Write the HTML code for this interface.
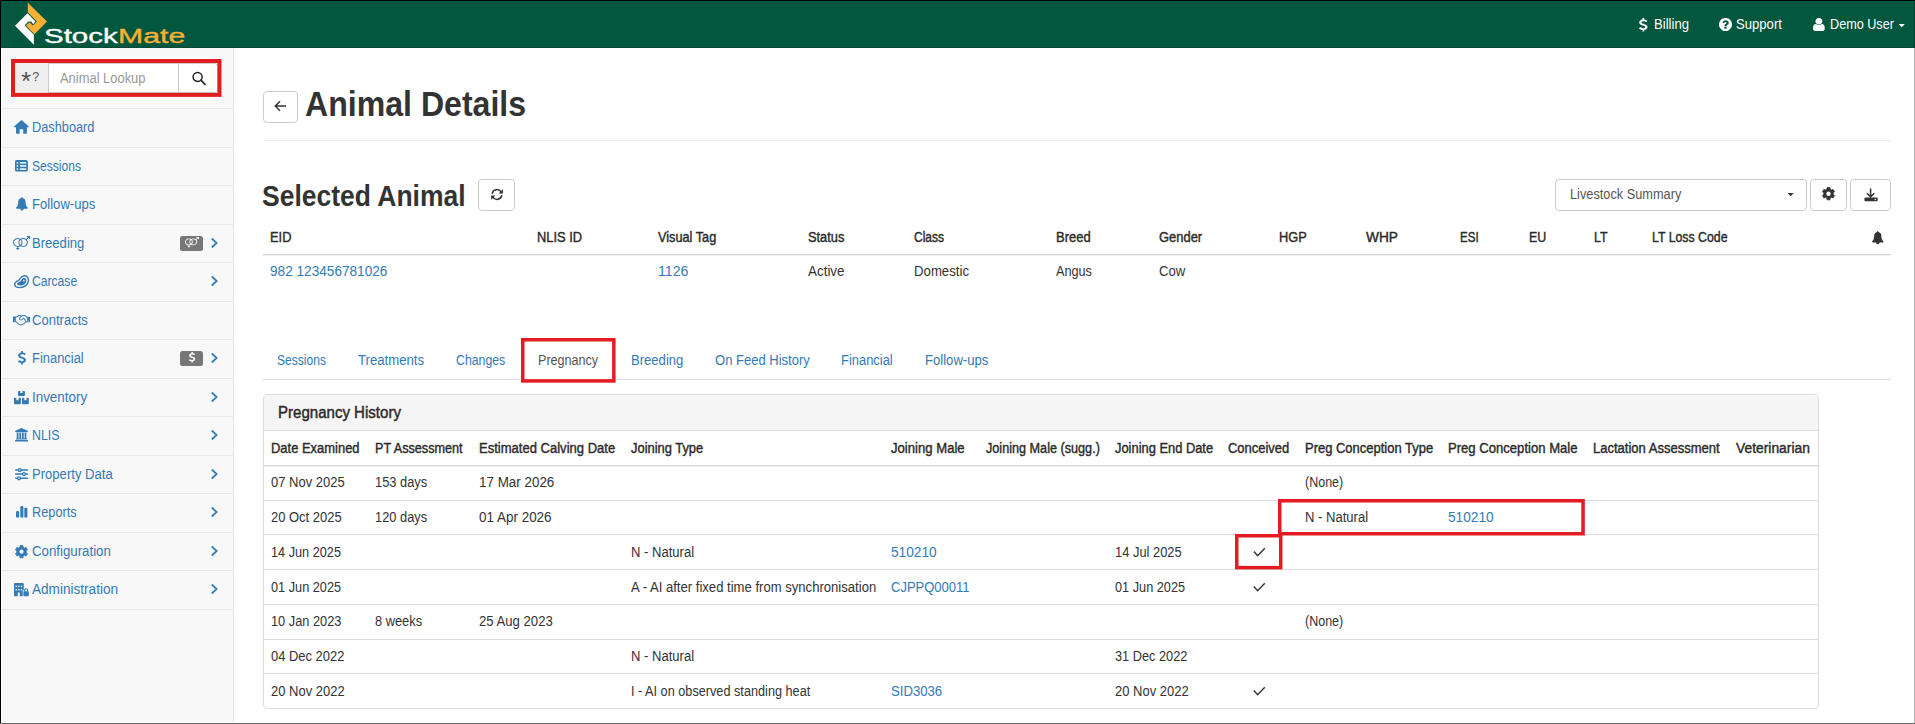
<!DOCTYPE html>
<html lang="en"><head><meta charset="utf-8"><title>StockMate - Animal Details</title>
<style>
html,body{margin:0;padding:0;background:#fff;}
body{width:1915px;height:724px;position:relative;overflow:hidden;font-family:"Liberation Sans", sans-serif;font-size:13.125px;color:#333;}
.g{position:absolute;left:0;top:0;width:0;height:0;margin:0;padding:0;}
.g>*{position:absolute;box-sizing:border-box;}
a{text-decoration:none;cursor:pointer;}
.t{white-space:pre;line-height:1;transform-origin:0 50%;}
svg{display:block;overflow:visible;}
</style></head><body>
<header class="g" aria-label="Top navigation">
<div style="left:0px;top:0px;width:1915px;height:48px;background:#02573f;"></div>
<div style="left:0px;top:47px;width:1915px;height:1px;background:#014a36;"></div>
<svg style="left:0px;top:0px" width="60" height="48" viewBox="0 0 60 48"><polygon fill="#fbb034" points="27.8,2.8 47,21.55 34.5,34.2 25.9,25.5 29.5,22.2 32.9,25.5 36.9,21.55 27.8,12.3"/><polygon fill="#fff" points="27.5,13.3 15,25.7 33.9,44.8 33.9,34.8 24.7,25.5 28.2,21.55 31.2,21.55 33.2,24.2 35.5,21.55"/></svg>
<span class="t" style="left:44.40px;top:26.05px;font-size:20.5px;color:#fff;-webkit-text-stroke:0.35px #fff;transform:scaleX(1.4391);">Stock</span>
<span class="t" style="left:117.60px;top:26.05px;font-size:20.5px;color:#fbb034;-webkit-text-stroke:0.35px #fbb034;transform:scaleX(1.4744);">Mate</span>
<svg style="left:1638.5px;top:17.5px" width="8.5" height="13.5" viewBox="45.0 -1536.0 933.0 1792.0" preserveAspectRatio="none"><path fill="#fff" transform="scale(1,-1)" d="M978 351q0 -153 -99.5 -263.5t-258.5 -136.5v-175q0 -14 -9 -23t-23 -9h-135q-13 0 -22.5 9.5t-9.5 22.5v175q-66 9 -127.5 31t-101.5 44.5t-74 48t-46.5 37.5t-17.5 18q-17 21 -2 41l103 135q7 10 23 12q15 2 24 -9l2 -2q113 -99 243 -125q37 -8 74 -8q81 0 142.5 43
t61.5 122q0 28 -15 53t-33.5 42t-58.5 37.5t-66 32t-80 32.5q-39 16 -61.5 25t-61.5 26.5t-62.5 31t-56.5 35.5t-53.5 42.5t-43.5 49t-35.5 58t-21 66.5t-8.5 78q0 138 98 242t255 134v180q0 13 9.5 22.5t22.5 9.5h135q14 0 23 -9t9 -23v-176q57 -6 110.5 -23t87 -33.5
t63.5 -37.5t39 -29t15 -14q17 -18 5 -38l-81 -146q-8 -15 -23 -16q-14 -3 -27 7q-3 3 -14.5 12t-39 26.5t-58.5 32t-74.5 26t-85.5 11.5q-95 0 -155 -43t-60 -111q0 -26 8.5 -48t29.5 -41.5t39.5 -33t56 -31t60.5 -27t70 -27.5q53 -20 81 -31.5t76 -35t75.5 -42.5t62 -50
t53 -63.5t31.5 -76.5t13 -94z"/></svg>
<span class="t" style="left:1653.70px;top:17.15px;font-size:14.0px;color:#fff;transform:scaleX(0.9356);">Billing</span>
<svg style="left:1719.2px;top:17.5px" width="13" height="13" viewBox="0.0 -1408.0 1536.0 1536.0" preserveAspectRatio="none"><path fill="#fff" transform="scale(1,-1)" d="M896 160v192q0 14 -9 23t-23 9h-192q-14 0 -23 -9t-9 -23v-192q0 -14 9 -23t23 -9h192q14 0 23 9t9 23zM1152 832q0 88 -55.5 163t-138.5 116t-170 41q-243 0 -371 -213q-15 -24 8 -42l132 -100q7 -6 19 -6q16 0 25 12q53 68 86 92q34 24 86 24q48 0 85.5 -26t37.5 -59
q0 -38 -20 -61t-68 -45q-63 -28 -115.5 -86.5t-52.5 -125.5v-36q0 -14 9 -23t23 -9h192q14 0 23 9t9 23q0 19 21.5 49.5t54.5 49.5q32 18 49 28.5t46 35t44.5 48t28 60.5t12.5 81zM1536 640q0 -209 -103 -385.5t-279.5 -279.5t-385.5 -103t-385.5 103t-279.5 279.5
t-103 385.5t103 385.5t279.5 279.5t385.5 103t385.5 -103t279.5 -279.5t103 -385.5z"/></svg>
<span class="t" style="left:1736.40px;top:17.15px;font-size:14.0px;color:#fff;transform:scaleX(0.9356);">Support</span>
<svg style="left:1813.2px;top:17.5px" width="11.8" height="13" viewBox="0.0 -1408.0 1280.0 1536.0" preserveAspectRatio="none"><path fill="#fff" transform="scale(1,-1)" d="M1280 137q0 -109 -62.5 -187t-150.5 -78h-854q-88 0 -150.5 78t-62.5 187q0 85 8.5 160.5t31.5 152t58.5 131t94 89t134.5 34.5q131 -128 313 -128t313 128q76 0 134.5 -34.5t94 -89t58.5 -131t31.5 -152t8.5 -160.5zM1024 1024q0 -159 -112.5 -271.5t-271.5 -112.5
t-271.5 112.5t-112.5 271.5t112.5 271.5t271.5 112.5t271.5 -112.5t112.5 -271.5z"/></svg>
<span class="t" style="left:1830.40px;top:17.15px;font-size:14.0px;color:#fff;transform:scaleX(0.9026);">Demo User</span>
<svg style="left:1899.3px;top:23.5px" width="5.6" height="3.2" viewBox="0.0 -896.0 1024.0 576.0" preserveAspectRatio="none"><path fill="#fff" transform="scale(1,-1)" d="M1024 832q0 -26 -19 -45l-448 -448q-19 -19 -45 -19t-45 19l-448 448q-19 19 -19 45t19 45t45 19h896q26 0 45 -19t19 -45z"/></svg>
</header>
<nav class="g" aria-label="Sidebar">
<div style="left:2px;top:48px;width:232px;height:674px;background:#f8f8f8;border-right:1px solid #e7e7e7;"></div>
<div style="left:15px;top:63px;width:203px;height:30px;background:#fff;border:1px solid #ccc;border-radius:3px;"></div>
<div style="left:15px;top:63px;width:34px;height:30px;background:#eee;border-right:1px solid #ccc;"></div>
<div style="left:178px;top:63px;width:1px;height:30px;background:#ccc;"></div>
<span class="t" style="left:21px;top:68.2px;font-size:26px;color:#555">*</span>
<span class="t" style="left:32.3px;top:70.6px;font-size:12.5px;color:#555">?</span>
<span class="t" style="left:59.60px;top:70.65px;font-size:14.0px;color:#999;transform:scaleX(0.9231);">Animal Lookup</span>
<svg style="left:190px;top:70px" width="18" height="18" viewBox="0 0 18 18"><circle cx="7.6" cy="6.9" r="4.5" fill="none" stroke="#222" stroke-width="1.5"/><path d="M10.9 10.2 L15 14.3" stroke="#222" stroke-width="1.7" stroke-linecap="round"/></svg>
<svg style="left:11px;top:59px" width="210.50" height="37.90" viewBox="0 0 210.50 37.90"><rect x="2.0" y="2.0" width="206.50" height="33.90" fill="none" stroke="#e31c22" stroke-width="4"/></svg>
<div style="left:2px;top:108px;width:231px;height:1px;background:#e7e7e7;"></div>
<div style="left:2px;top:147px;width:231px;height:1px;background:#e7e7e7;"></div>
<div style="left:2px;top:185px;width:231px;height:1px;background:#e7e7e7;"></div>
<div style="left:2px;top:224px;width:231px;height:1px;background:#e7e7e7;"></div>
<div style="left:2px;top:262px;width:231px;height:1px;background:#e7e7e7;"></div>
<div style="left:2px;top:301px;width:231px;height:1px;background:#e7e7e7;"></div>
<div style="left:2px;top:339px;width:231px;height:1px;background:#e7e7e7;"></div>
<div style="left:2px;top:378px;width:231px;height:1px;background:#e7e7e7;"></div>
<div style="left:2px;top:416px;width:231px;height:1px;background:#e7e7e7;"></div>
<div style="left:2px;top:455px;width:231px;height:1px;background:#e7e7e7;"></div>
<div style="left:2px;top:493px;width:231px;height:1px;background:#e7e7e7;"></div>
<div style="left:2px;top:532px;width:231px;height:1px;background:#e7e7e7;"></div>
<div style="left:2px;top:570px;width:231px;height:1px;background:#e7e7e7;"></div>
<div style="left:2px;top:609px;width:231px;height:1px;background:#e7e7e7;"></div>
<a class="t" style="left:32.10px;top:119.95px;font-size:14.0px;color:#337ab7;transform:scaleX(0.9117);">Dashboard</a>
<a class="t" style="left:32.10px;top:158.95px;font-size:14.0px;color:#337ab7;transform:scaleX(0.8611);">Sessions</a>
<a class="t" style="left:32.10px;top:196.95px;font-size:14.0px;color:#337ab7;transform:scaleX(0.9351);">Follow-ups</a>
<a class="t" style="left:32.10px;top:235.95px;font-size:14.0px;color:#337ab7;transform:scaleX(0.9336);">Breeding</a>
<svg style="left:210px;top:237px" width="9" height="12" viewBox="0 0 9 12"><path d="M1.7 1.5 L6.7 6 L1.7 10.5" fill="none" stroke="#337ab7" stroke-width="1.7"/></svg>
<a class="t" style="left:32.10px;top:273.95px;font-size:14.0px;color:#337ab7;transform:scaleX(0.8660);">Carcase</a>
<svg style="left:210px;top:275px" width="9" height="12" viewBox="0 0 9 12"><path d="M1.7 1.5 L6.7 6 L1.7 10.5" fill="none" stroke="#337ab7" stroke-width="1.7"/></svg>
<a class="t" style="left:32.10px;top:312.95px;font-size:14.0px;color:#337ab7;transform:scaleX(0.9314);">Contracts</a>
<a class="t" style="left:32.10px;top:350.95px;font-size:14.0px;color:#337ab7;transform:scaleX(0.9230);">Financial</a>
<svg style="left:210px;top:352px" width="9" height="12" viewBox="0 0 9 12"><path d="M1.7 1.5 L6.7 6 L1.7 10.5" fill="none" stroke="#337ab7" stroke-width="1.7"/></svg>
<a class="t" style="left:32.10px;top:389.95px;font-size:14.0px;color:#337ab7;transform:scaleX(0.9569);">Inventory</a>
<svg style="left:210px;top:391px" width="9" height="12" viewBox="0 0 9 12"><path d="M1.7 1.5 L6.7 6 L1.7 10.5" fill="none" stroke="#337ab7" stroke-width="1.7"/></svg>
<a class="t" style="left:32.10px;top:427.95px;font-size:14.0px;color:#337ab7;transform:scaleX(0.8845);">NLIS</a>
<svg style="left:210px;top:429px" width="9" height="12" viewBox="0 0 9 12"><path d="M1.7 1.5 L6.7 6 L1.7 10.5" fill="none" stroke="#337ab7" stroke-width="1.7"/></svg>
<a class="t" style="left:32.10px;top:466.95px;font-size:14.0px;color:#337ab7;transform:scaleX(0.9340);">Property Data</a>
<svg style="left:210px;top:468px" width="9" height="12" viewBox="0 0 9 12"><path d="M1.7 1.5 L6.7 6 L1.7 10.5" fill="none" stroke="#337ab7" stroke-width="1.7"/></svg>
<a class="t" style="left:32.10px;top:504.95px;font-size:14.0px;color:#337ab7;transform:scaleX(0.9105);">Reports</a>
<svg style="left:210px;top:506px" width="9" height="12" viewBox="0 0 9 12"><path d="M1.7 1.5 L6.7 6 L1.7 10.5" fill="none" stroke="#337ab7" stroke-width="1.7"/></svg>
<a class="t" style="left:32.10px;top:543.95px;font-size:14.0px;color:#337ab7;transform:scaleX(0.9465);">Configuration</a>
<svg style="left:210px;top:545px" width="9" height="12" viewBox="0 0 9 12"><path d="M1.7 1.5 L6.7 6 L1.7 10.5" fill="none" stroke="#337ab7" stroke-width="1.7"/></svg>
<a class="t" style="left:32.10px;top:581.95px;font-size:14.0px;color:#337ab7;transform:scaleX(0.9699);">Administration</a>
<svg style="left:210px;top:583px" width="9" height="12" viewBox="0 0 9 12"><path d="M1.7 1.5 L6.7 6 L1.7 10.5" fill="none" stroke="#337ab7" stroke-width="1.7"/></svg>
<svg style="left:14px;top:120.3px" width="14.9" height="13.7" viewBox="0 0 15 13.7"><path fill="#337ab7" d="M7.5 0 L15 6.6 L14.1 7.7 L13 6.8 V12.7 Q13 13.7 12 13.7 H9.3 V9.2 H5.7 V13.7 H3 Q2 13.7 2 12.7 V6.8 L0.9 7.7 L0 6.6 Z"/></svg>
<svg style="left:15px;top:160.1px" width="12.9" height="11.6" viewBox="0 0 12.9 11.6"><rect width="12.9" height="11.6" rx="1.7" fill="#337ab7"/><rect x="1.7" y="2.0" width="1.5" height="1.6" fill="#f8f8f8"/><rect x="5" y="2.0" width="6.2" height="1.6" fill="#f8f8f8"/><rect x="1.7" y="5.1" width="1.5" height="1.6" fill="#f8f8f8"/><rect x="5" y="5.1" width="6.2" height="1.6" fill="#f8f8f8"/><rect x="1.7" y="8.3" width="1.5" height="1.6" fill="#f8f8f8"/><rect x="5" y="8.3" width="6.2" height="1.6" fill="#f8f8f8"/></svg>
<svg style="left:15.5px;top:197.3px" width="11.8" height="13.7" viewBox="64.0 -1536.0 1664.0 1792.0" preserveAspectRatio="none"><path fill="#337ab7" transform="scale(1,-1)" d="M912 -160q0 16 -16 16q-59 0 -101.5 42.5t-42.5 101.5q0 16 -16 16t-16 -16q0 -73 51.5 -124.5t124.5 -51.5q16 0 16 16zM1728 128q0 -52 -38 -90t-90 -38h-448q0 -106 -75 -181t-181 -75t-181 75t-75 181h-448q-52 0 -90 38t-38 90q50 42 91 88t85 119.5t74.5 158.5
t50 206t19.5 260q0 152 117 282.5t307 158.5q-8 19 -8 39q0 40 28 68t68 28t68 -28t28 -68q0 -20 -8 -39q190 -28 307 -158.5t117 -282.5q0 -139 19.5 -260t50 -206t74.5 -158.5t85 -119.5t91 -88z"/></svg>
<svg style="left:13px;top:236.1px" width="17" height="13.9" viewBox="-0.2 -1536.0 2048.2 1792.0" preserveAspectRatio="none"><path fill="#337ab7" transform="scale(1,-1)" d="M1664 1504q0 14 9 23t23 9h288q26 0 45 -19t19 -45v-288q0 -14 -9 -23t-23 -9h-64q-14 0 -23 9t-9 23v134l-254 -255q76 -95 107.5 -214t9.5 -247q-32 -180 -164.5 -310t-313.5 -157q-223 -34 -409 90q-117 -78 -256 -93v-132h96q14 0 23 -9t9 -23v-64q0 -14 -9 -23
t-23 -9h-96v-96q0 -14 -9 -23t-23 -9h-64q-14 0 -23 9t-9 23v96h-96q-14 0 -23 9t-9 23v64q0 14 9 23t23 9h96v132q-155 17 -279.5 109.5t-187 237.5t-39.5 307q25 187 159.5 322.5t320.5 164.5q224 34 410 -90q146 97 320 97q201 0 359 -126l255 254h-134q-14 0 -23 9
t-9 23v64zM896 391q128 131 128 313t-128 313q-128 -131 -128 -313t128 -313zM128 704q0 -185 131.5 -316.5t316.5 -131.5q117 0 218 57q-154 167 -154 391t154 391q-101 57 -218 57q-185 0 -316.5 -131.5t-131.5 -316.5zM1216 256q185 0 316.5 131.5t131.5 316.5
t-131.5 316.5t-316.5 131.5q-117 0 -218 -57q154 -167 154 -391t-154 -391q101 -57 218 -57z"/></svg>
<svg style="left:14px;top:274.5px" width="15.1" height="13.3" viewBox="0 0 15.1 13.3"><path d="M10.5 0.7 C13.5 0.7 14.6 3.4 14.4 6 C14.1 9.6 10.6 12.6 6 12.6 C2.6 12.6 0.7 11.1 0.7 9 C0.7 6.6 3.4 6.4 5.2 4.7 C6.7 3.2 7.6 0.7 10.5 0.7 Z" fill="none" stroke="#337ab7" stroke-width="1.4"/><path d="M10.2 3 C12 3 12.5 4.6 12.3 6.2 C12 8.6 9.6 10.5 6.2 10.5 C4 10.5 3 9.8 3 8.8 C3 7.6 5.2 7.4 6.6 6 C7.7 4.9 8.3 3 10.2 3 Z" fill="#337ab7"/><circle cx="9.9" cy="5.6" r="0.85" fill="#f8f8f8"/></svg>
<svg style="left:13px;top:314.7px" width="17" height="10.4" viewBox="0.0 -1280.0 2304.0 1455.7" preserveAspectRatio="none"><path fill="#337ab7" transform="scale(1,-1)" d="M192 384q40 0 56 32t0 64t-56 32t-56 -32t0 -64t56 -32zM1665 442q-10 13 -38.5 50t-41.5 54t-38 49t-42.5 53t-40.5 47t-45 49l-125 -140q-83 -94 -208.5 -92t-205.5 98q-57 69 -56.5 158t58.5 157l177 206q-22 11 -51 16.5t-47.5 6t-56.5 -0.5t-49 -1q-92 0 -158 -66
l-158 -158h-155v-544q5 0 21 0.5t22 0t19.5 -2t20.5 -4.5t17.5 -8.5t18.5 -13.5l297 -292q115 -111 227 -111q78 0 125 47q57 -20 112.5 8t72.5 85q74 -6 127 44q20 18 36 45.5t14 50.5q10 -10 43 -10q43 0 77 21t49.5 53t12 71.5t-30.5 73.5zM1824 384h96v512h-93l-157 180
q-66 76 -169 76h-167q-89 0 -146 -67l-209 -243q-28 -33 -28 -75t27 -75q43 -51 110 -52t111 49l193 218q25 23 53.5 21.5t47 -27t8.5 -56.5q16 -19 56 -63t60 -68q29 -36 82.5 -105.5t64.5 -84.5q52 -66 60 -140zM2112 384q40 0 56 32t0 64t-56 32t-56 -32t0 -64t56 -32z
M2304 960v-640q0 -26 -19 -45t-45 -19h-434q-27 -65 -82 -106.5t-125 -51.5q-33 -48 -80.5 -81.5t-102.5 -45.5q-42 -53 -104.5 -81.5t-128.5 -24.5q-60 -34 -126 -39.5t-127.5 14t-117 53.5t-103.5 81l-287 282h-358q-26 0 -45 19t-19 45v672q0 26 19 45t45 19h421
q14 14 47 48t47.5 48t44 40t50.5 37.5t51 25.5t62 19.5t68 5.5h117q99 0 181 -56q82 56 181 56h167q35 0 67 -6t56.5 -14.5t51.5 -26.5t44.5 -31t43 -39.5t39 -42t41 -48t41.5 -48.5h355q26 0 45 -19t19 -45z"/></svg>
<svg style="left:17.5px;top:351.3px" width="7.9" height="13.5" viewBox="45.0 -1536.0 933.0 1792.0" preserveAspectRatio="none"><path fill="#337ab7" transform="scale(1,-1)" d="M978 351q0 -153 -99.5 -263.5t-258.5 -136.5v-175q0 -14 -9 -23t-23 -9h-135q-13 0 -22.5 9.5t-9.5 22.5v175q-66 9 -127.5 31t-101.5 44.5t-74 48t-46.5 37.5t-17.5 18q-17 21 -2 41l103 135q7 10 23 12q15 2 24 -9l2 -2q113 -99 243 -125q37 -8 74 -8q81 0 142.5 43
t61.5 122q0 28 -15 53t-33.5 42t-58.5 37.5t-66 32t-80 32.5q-39 16 -61.5 25t-61.5 26.5t-62.5 31t-56.5 35.5t-53.5 42.5t-43.5 49t-35.5 58t-21 66.5t-8.5 78q0 138 98 242t255 134v180q0 13 9.5 22.5t22.5 9.5h135q14 0 23 -9t9 -23v-176q57 -6 110.5 -23t87 -33.5
t63.5 -37.5t39 -29t15 -14q17 -18 5 -38l-81 -146q-8 -15 -23 -16q-14 -3 -27 7q-3 3 -14.5 12t-39 26.5t-58.5 32t-74.5 26t-85.5 11.5q-95 0 -155 -43t-60 -111q0 -26 8.5 -48t29.5 -41.5t39.5 -33t56 -31t60.5 -27t70 -27.5q53 -20 81 -31.5t76 -35t75.5 -42.5t62 -50
t53 -63.5t31.5 -76.5t13 -94z"/></svg>
<svg style="left:14.1px;top:390.6px" width="14.8" height="13.2" viewBox="0 0 14.8 13.2"><path fill="#337ab7" d="M4.8 0 H6.346 V2.04 H8.554 V0 H10.1 Q10.9 0 10.9 0.8 V4.3 Q10.9 5.1 10.1 5.1 H4.8 Q4 5.1 4 4.3 V0.8 Q4 0 4.8 0 Z"/><path fill="#337ab7" d="M0.8 6.7 H2.346 V9.3 H4.554 V6.7 H6.1000000000000005 Q6.9 6.7 6.9 7.5 V12.399999999999999 Q6.9 13.2 6.1000000000000005 13.2 H0.8 Q0 13.2 0 12.399999999999999 V7.5 Q0 6.7 0.8 6.7 Z"/><path fill="#337ab7" d="M8.8 6.7 H10.312000000000001 V9.3 H12.488 V6.7 H14.0 Q14.8 6.7 14.8 7.5 V12.399999999999999 Q14.8 13.2 14.0 13.2 H8.8 Q8 13.2 8 12.399999999999999 V7.5 Q8 6.7 8.8 6.7 Z"/></svg>
<svg style="left:15px;top:428.3px" width="13.1" height="13.5" viewBox="0.0 -1536.0 1920.0 1792.0" preserveAspectRatio="none"><path fill="#337ab7" transform="scale(1,-1)" d="M960 1536l960 -384v-128h-128q0 -26 -20.5 -45t-48.5 -19h-1526q-28 0 -48.5 19t-20.5 45h-128v128zM256 896h256v-768h128v768h256v-768h128v768h256v-768h128v768h256v-768h59q28 0 48.5 -19t20.5 -45v-64h-1664v64q0 26 20.5 45t48.5 19h59v768zM1851 -64
q28 0 48.5 -19t20.5 -45v-128h-1920v128q0 26 20.5 45t48.5 19h1782z"/></svg>
<svg style="left:15px;top:466px" width="13.1" height="16" viewBox="0 0 13.1 16"><rect x="0" y="3.25" width="13.1" height="1.5" rx="0.7" fill="#337ab7"/><rect x="0" y="7.35" width="13.1" height="1.5" rx="0.7" fill="#337ab7"/><rect x="0" y="11.55" width="13.1" height="1.5" rx="0.7" fill="#337ab7"/><circle cx="4.8" cy="4" r="1.45" fill="#f8f8f8" stroke="#337ab7" stroke-width="1.3"/><circle cx="8.95" cy="8.1" r="1.45" fill="#f8f8f8" stroke="#337ab7" stroke-width="1.3"/><circle cx="4.0" cy="12.3" r="1.45" fill="#f8f8f8" stroke="#337ab7" stroke-width="1.3"/></svg>
<svg style="left:15.7px;top:506.3px" width="11.4" height="11.6" viewBox="0 0 11.4 11.6"><rect x="0" y="5" width="3.1" height="6.6" rx="1.2" fill="#337ab7"/><rect x="4.3" y="0" width="3.1" height="11.6" rx="1.2" fill="#337ab7"/><rect x="8.3" y="1.7" width="3.1" height="9.9" rx="1.2" fill="#337ab7"/></svg>
<svg style="left:15.1px;top:544.5px" width="13" height="13.4" viewBox="0 0 13 13.4"><polygon points="8.18,2.31 7.92,0.56 5.08,0.56 4.82,2.31 3.54,3.05 1.89,2.40 0.48,4.86 1.86,5.96 1.86,7.44 0.48,8.54 1.89,11.00 3.54,10.35 4.82,11.09 5.08,12.84 7.92,12.84 8.18,11.09 9.46,10.35 11.11,11.00 12.52,8.54 11.14,7.44 11.14,5.96 12.52,4.86 11.11,2.40 9.46,3.05" fill="#337ab7" stroke="#337ab7" stroke-width="0.8" stroke-linejoin="round"/><circle cx="6.5" cy="6.7" r="2.1" fill="#f8f8f8"/></svg>
<svg style="left:14.2px;top:582.5px" width="14.8" height="13.3" viewBox="0 0 14.8 13.3"><rect x="0" y="0" width="9.75" height="13.3" rx="1" fill="#337ab7"/><rect x="1.6" y="2.6" width="1.3" height="1.5" fill="#f8f8f8"/><rect x="4.2" y="2.6" width="1.3" height="1.5" fill="#f8f8f8"/><rect x="6.8" y="2.6" width="1.3" height="1.5" fill="#f8f8f8"/><rect x="1.6" y="6.0" width="1.3" height="1.5" fill="#f8f8f8"/><rect x="4.2" y="6.0" width="1.3" height="1.5" fill="#f8f8f8"/><rect x="6.8" y="6.0" width="1.3" height="1.5" fill="#f8f8f8"/><rect x="3.8" y="9.6" width="2.1" height="3.8" fill="#f8f8f8"/><rect x="8.7" y="7.4" width="6.6" height="6.4" fill="#f8f8f8"/><rect x="9.4" y="8.2" width="5.4" height="5.1" rx="0.8" fill="#337ab7"/><path d="M10.6 8.4 V7.3 A1.5 1.6 0 0 1 13.6 7.3 V8.4" fill="none" stroke="#337ab7" stroke-width="1.1"/></svg>
<div style="left:180px;top:235.9px;width:23px;height:15px;background:#777;border-radius:2.5px;"></div>
<svg style="left:185.05px;top:237px" width="13.9" height="10.6" viewBox="-0.2 -1536.0 2048.2 1792.0" preserveAspectRatio="none"><path fill="#fff" transform="scale(1,-1)" d="M1664 1504q0 14 9 23t23 9h288q26 0 45 -19t19 -45v-288q0 -14 -9 -23t-23 -9h-64q-14 0 -23 9t-9 23v134l-254 -255q76 -95 107.5 -214t9.5 -247q-32 -180 -164.5 -310t-313.5 -157q-223 -34 -409 90q-117 -78 -256 -93v-132h96q14 0 23 -9t9 -23v-64q0 -14 -9 -23
t-23 -9h-96v-96q0 -14 -9 -23t-23 -9h-64q-14 0 -23 9t-9 23v96h-96q-14 0 -23 9t-9 23v64q0 14 9 23t23 9h96v132q-155 17 -279.5 109.5t-187 237.5t-39.5 307q25 187 159.5 322.5t320.5 164.5q224 34 410 -90q146 97 320 97q201 0 359 -126l255 254h-134q-14 0 -23 9
t-9 23v64zM896 391q128 131 128 313t-128 313q-128 -131 -128 -313t128 -313zM128 704q0 -185 131.5 -316.5t316.5 -131.5q117 0 218 57q-154 167 -154 391t154 391q-101 57 -218 57q-185 0 -316.5 -131.5t-131.5 -316.5zM1216 256q185 0 316.5 131.5t131.5 316.5
t-131.5 316.5t-316.5 131.5q-117 0 -218 -57q154 -167 154 -391t-154 -391q101 -57 218 -57z"/></svg>
<div style="left:180px;top:350.9px;width:23px;height:15px;background:#777;border-radius:2.5px;"></div>
<svg style="left:188.9px;top:352px" width="6.2" height="10.6" viewBox="45.0 -1536.0 933.0 1792.0" preserveAspectRatio="none"><path fill="#fff" transform="scale(1,-1)" d="M978 351q0 -153 -99.5 -263.5t-258.5 -136.5v-175q0 -14 -9 -23t-23 -9h-135q-13 0 -22.5 9.5t-9.5 22.5v175q-66 9 -127.5 31t-101.5 44.5t-74 48t-46.5 37.5t-17.5 18q-17 21 -2 41l103 135q7 10 23 12q15 2 24 -9l2 -2q113 -99 243 -125q37 -8 74 -8q81 0 142.5 43
t61.5 122q0 28 -15 53t-33.5 42t-58.5 37.5t-66 32t-80 32.5q-39 16 -61.5 25t-61.5 26.5t-62.5 31t-56.5 35.5t-53.5 42.5t-43.5 49t-35.5 58t-21 66.5t-8.5 78q0 138 98 242t255 134v180q0 13 9.5 22.5t22.5 9.5h135q14 0 23 -9t9 -23v-176q57 -6 110.5 -23t87 -33.5
t63.5 -37.5t39 -29t15 -14q17 -18 5 -38l-81 -146q-8 -15 -23 -16q-14 -3 -27 7q-3 3 -14.5 12t-39 26.5t-58.5 32t-74.5 26t-85.5 11.5q-95 0 -155 -43t-60 -111q0 -26 8.5 -48t29.5 -41.5t39.5 -33t56 -31t60.5 -27t70 -27.5q53 -20 81 -31.5t76 -35t75.5 -42.5t62 -50
t53 -63.5t31.5 -76.5t13 -94z"/></svg>
</nav>
<main class="g" aria-label="Animal Details">
<div style="left:263px;top:91px;width:35px;height:32px;background:#fff;border:1px solid #ccc;border-radius:4px;"></div>
<svg style="left:274px;top:100px" width="13" height="12" viewBox="0 0 13 12"><path d="M12 6 H1.5 M6 1.2 L1.2 6 L6 10.8" fill="none" stroke="#333" stroke-width="1.4"/></svg>
<span class="t" style="left:305.20px;top:86.78px;font-size:34.76px;color:#333;font-weight:700;transform:scaleX(0.9233);">Animal Details</span>
<div style="left:263px;top:140px;width:1627.5px;height:1px;background:#eee;"></div>
<span class="t" style="left:261.80px;top:181.81px;font-size:28.69px;color:#333;font-weight:700;transform:scaleX(0.9231);">Selected Animal</span>
<div style="left:478px;top:179px;width:37px;height:32px;background:#fff;border:1px solid #ccc;border-radius:4px;"></div>
<svg style="left:489.5px;top:187.5px" width="14" height="13" viewBox="0 0 14 13"><path d="M2.2 5.8 A4.8 4.8 0 0 1 11.2 4.2 M11.8 7.2 A4.8 4.8 0 0 1 2.8 8.8" fill="none" stroke="#333" stroke-width="1.5"/><path d="M12.9 1.2 V5.6 H8.5 Z M1.1 11.8 V7.4 H5.5 Z" fill="#333"/></svg>
<div style="left:1555px;top:179px;width:252px;height:32px;background:#fff;border:1px solid #ccc;border-radius:4px;"></div>
<span class="t" style="left:1569.90px;top:187.35px;font-size:14.0px;color:#555;transform:scaleX(0.9115);">Livestock Summary</span>
<svg style="left:1788.4px;top:192.9px" width="5.4" height="3.1" viewBox="0.0 -896.0 1024.0 576.0" preserveAspectRatio="none"><path fill="#333" transform="scale(1,-1)" d="M1024 832q0 -26 -19 -45l-448 -448q-19 -19 -45 -19t-45 19l-448 448q-19 19 -19 45t19 45t45 19h896q26 0 45 -19t19 -45z"/></svg>
<div style="left:1810px;top:179px;width:37px;height:32px;background:#fff;border:1px solid #ccc;border-radius:4px;"></div>
<svg style="left:1821.9px;top:187.4px" width="13" height="13.4" viewBox="0 0 13 13.4"><polygon points="8.18,2.31 7.92,0.56 5.08,0.56 4.82,2.31 3.54,3.05 1.89,2.40 0.48,4.86 1.86,5.96 1.86,7.44 0.48,8.54 1.89,11.00 3.54,10.35 4.82,11.09 5.08,12.84 7.92,12.84 8.18,11.09 9.46,10.35 11.11,11.00 12.52,8.54 11.14,7.44 11.14,5.96 12.52,4.86 11.11,2.40 9.46,3.05" fill="#333" stroke="#333" stroke-width="0.8" stroke-linejoin="round"/><circle cx="6.5" cy="6.7" r="2.2" fill="#fff"/></svg>
<div style="left:1850px;top:179px;width:41px;height:32px;background:#fff;border:1px solid #ccc;border-radius:4px;"></div>
<svg style="left:1863.5px;top:187.5px" width="14" height="14" viewBox="0 0 14 14"><path d="M6.6 0.6 V8.6 M2.9 5.2 L6.6 8.9 L10.3 5.2" fill="none" stroke="#333" stroke-width="1.5"/><rect x="0.4" y="9.6" width="13.3" height="3.7" rx="1.2" fill="#333"/><circle cx="11.3" cy="11.5" r="0.7" fill="#fff"/></svg>
<span class="t" style="left:270.00px;top:229.95px;font-size:14.0px;color:#2b2b2b;-webkit-text-stroke:0.4px #2b2b2b;transform:scaleX(0.9170);">EID</span>
<span class="t" style="left:537.30px;top:229.95px;font-size:14.0px;color:#2b2b2b;-webkit-text-stroke:0.4px #2b2b2b;transform:scaleX(0.9187);">NLIS ID</span>
<span class="t" style="left:657.50px;top:229.95px;font-size:14.0px;color:#2b2b2b;-webkit-text-stroke:0.4px #2b2b2b;transform:scaleX(0.9093);">Visual Tag</span>
<span class="t" style="left:807.70px;top:229.95px;font-size:14.0px;color:#2b2b2b;-webkit-text-stroke:0.4px #2b2b2b;transform:scaleX(0.9162);">Status</span>
<span class="t" style="left:913.80px;top:229.95px;font-size:14.0px;color:#2b2b2b;-webkit-text-stroke:0.4px #2b2b2b;transform:scaleX(0.8599);">Class</span>
<span class="t" style="left:1055.80px;top:229.95px;font-size:14.0px;color:#2b2b2b;-webkit-text-stroke:0.4px #2b2b2b;transform:scaleX(0.9276);">Breed</span>
<span class="t" style="left:1159.20px;top:229.95px;font-size:14.0px;color:#2b2b2b;-webkit-text-stroke:0.4px #2b2b2b;transform:scaleX(0.9244);">Gender</span>
<span class="t" style="left:1278.90px;top:229.95px;font-size:14.0px;color:#2b2b2b;-webkit-text-stroke:0.4px #2b2b2b;transform:scaleX(0.9140);">HGP</span>
<span class="t" style="left:1366.10px;top:229.95px;font-size:14.0px;color:#2b2b2b;-webkit-text-stroke:0.4px #2b2b2b;transform:scaleX(0.9794);">WHP</span>
<span class="t" style="left:1460.20px;top:229.95px;font-size:14.0px;color:#2b2b2b;-webkit-text-stroke:0.4px #2b2b2b;transform:scaleX(0.8249);">ESI</span>
<span class="t" style="left:1529.10px;top:229.95px;font-size:14.0px;color:#2b2b2b;-webkit-text-stroke:0.4px #2b2b2b;transform:scaleX(0.8884);">EU</span>
<span class="t" style="left:1594.30px;top:229.95px;font-size:14.0px;color:#2b2b2b;-webkit-text-stroke:0.4px #2b2b2b;transform:scaleX(0.8827);">LT</span>
<span class="t" style="left:1652.00px;top:229.95px;font-size:14.0px;color:#2b2b2b;-webkit-text-stroke:0.4px #2b2b2b;transform:scaleX(0.8794);">LT Loss Code</span>
<svg style="left:1872px;top:230.7px" width="11.5" height="13.3" viewBox="64.0 -1536.0 1664.0 1792.0" preserveAspectRatio="none"><path fill="#333" transform="scale(1,-1)" d="M912 -160q0 16 -16 16q-59 0 -101.5 42.5t-42.5 101.5q0 16 -16 16t-16 -16q0 -73 51.5 -124.5t124.5 -51.5q16 0 16 16zM1728 128q0 -52 -38 -90t-90 -38h-448q0 -106 -75 -181t-181 -75t-181 75t-75 181h-448q-52 0 -90 38t-38 90q50 42 91 88t85 119.5t74.5 158.5
t50 206t19.5 260q0 152 117 282.5t307 158.5q-8 19 -8 39q0 40 28 68t68 28t68 -28t28 -68q0 -20 -8 -39q190 -28 307 -158.5t117 -282.5q0 -139 19.5 -260t50 -206t74.5 -158.5t85 -119.5t91 -88z"/></svg>
<div style="left:263px;top:254px;width:1628px;height:1px;background:#d6d6d6;"></div>
<div style="left:263px;top:255px;width:1628px;height:1px;background:#f0f0f0;"></div>
<a class="t" style="left:270.00px;top:263.95px;font-size:14.0px;color:#337ab7;transform:scaleX(0.9728);">982 123456781026</a>
<a class="t" style="left:657.50px;top:263.95px;font-size:14.0px;color:#337ab7;transform:scaleX(1.0104);">1126</a>
<span class="t" style="left:807.70px;top:263.95px;font-size:14.0px;color:#333;transform:scaleX(0.9586);">Active</span>
<span class="t" style="left:913.80px;top:263.95px;font-size:14.0px;color:#333;transform:scaleX(0.9430);">Domestic</span>
<span class="t" style="left:1055.80px;top:263.95px;font-size:14.0px;color:#333;transform:scaleX(0.9059);">Angus</span>
<span class="t" style="left:1159.20px;top:263.95px;font-size:14.0px;color:#333;transform:scaleX(0.9375);">Cow</span>
</main>
<section class="g" aria-label="Tabs">
<a class="t" style="left:277.10px;top:352.75px;font-size:14.0px;color:#337ab7;transform:scaleX(0.8611);">Sessions</a>
<a class="t" style="left:358.10px;top:352.75px;font-size:14.0px;color:#337ab7;transform:scaleX(0.9402);">Treatments</a>
<a class="t" style="left:455.80px;top:352.75px;font-size:14.0px;color:#337ab7;transform:scaleX(0.8782);">Changes</a>
<a class="t" style="left:630.50px;top:352.75px;font-size:14.0px;color:#337ab7;transform:scaleX(0.9336);">Breeding</a>
<a class="t" style="left:714.80px;top:352.75px;font-size:14.0px;color:#337ab7;transform:scaleX(0.9298);">On Feed History</a>
<a class="t" style="left:841.00px;top:352.75px;font-size:14.0px;color:#337ab7;transform:scaleX(0.9230);">Financial</a>
<a class="t" style="left:924.50px;top:352.75px;font-size:14.0px;color:#337ab7;transform:scaleX(0.9351);">Follow-ups</a>
<span class="t" style="left:537.70px;top:352.75px;font-size:14.0px;color:#555;transform:scaleX(0.8987);">Pregnancy</span>
<div style="left:263px;top:379px;width:1627.5px;height:1px;background:#ddd;"></div>
<svg style="left:521.4px;top:338.1px" width="94.60" height="44.70" viewBox="0 0 94.60 44.70"><rect x="1.75" y="1.75" width="91.10" height="41.20" fill="none" stroke="#e31c22" stroke-width="3.5"/></svg>
</section>
<section class="g" aria-label="Pregnancy History">
<div style="left:263px;top:394px;width:1555.5px;height:315px;background:#fff;border:1px solid #ddd;border-radius:4px;"></div>
<div style="left:264px;top:395px;width:1553.5px;height:35.5px;background:#f5f5f5;border-bottom:1px solid #ddd;border-radius:3px 3px 0 0;"></div>
<span class="t" style="left:277.50px;top:404.56px;font-size:16.0px;color:#2b2b2b;-webkit-text-stroke:0.45px #2b2b2b;transform:scaleX(0.9404);">Pregnancy History</span>
<span class="t" style="left:270.80px;top:441.35px;font-size:14.0px;color:#2b2b2b;-webkit-text-stroke:0.4px #2b2b2b;transform:scaleX(0.9252);">Date Examined</span>
<span class="t" style="left:375.10px;top:441.35px;font-size:14.0px;color:#2b2b2b;-webkit-text-stroke:0.4px #2b2b2b;transform:scaleX(0.9034);">PT Assessment</span>
<span class="t" style="left:478.80px;top:441.35px;font-size:14.0px;color:#2b2b2b;-webkit-text-stroke:0.4px #2b2b2b;transform:scaleX(0.9308);">Estimated Calving Date</span>
<span class="t" style="left:630.70px;top:441.35px;font-size:14.0px;color:#2b2b2b;-webkit-text-stroke:0.4px #2b2b2b;transform:scaleX(0.9216);">Joining Type</span>
<span class="t" style="left:891.10px;top:441.35px;font-size:14.0px;color:#2b2b2b;-webkit-text-stroke:0.4px #2b2b2b;transform:scaleX(0.9368);">Joining Male</span>
<span class="t" style="left:985.50px;top:441.35px;font-size:14.0px;color:#2b2b2b;-webkit-text-stroke:0.4px #2b2b2b;transform:scaleX(0.9033);">Joining Male (sugg.)</span>
<span class="t" style="left:1114.70px;top:441.35px;font-size:14.0px;color:#2b2b2b;-webkit-text-stroke:0.4px #2b2b2b;transform:scaleX(0.9200);">Joining End Date</span>
<span class="t" style="left:1227.90px;top:441.35px;font-size:14.0px;color:#2b2b2b;-webkit-text-stroke:0.4px #2b2b2b;transform:scaleX(0.9244);">Conceived</span>
<span class="t" style="left:1305.10px;top:441.35px;font-size:14.0px;color:#2b2b2b;-webkit-text-stroke:0.4px #2b2b2b;transform:scaleX(0.9264);">Preg Conception Type</span>
<span class="t" style="left:1448.40px;top:441.35px;font-size:14.0px;color:#2b2b2b;-webkit-text-stroke:0.4px #2b2b2b;transform:scaleX(0.9349);">Preg Conception Male</span>
<span class="t" style="left:1593.40px;top:441.35px;font-size:14.0px;color:#2b2b2b;-webkit-text-stroke:0.4px #2b2b2b;transform:scaleX(0.9299);">Lactation Assessment</span>
<span class="t" style="left:1736.20px;top:441.35px;font-size:14.0px;color:#2b2b2b;-webkit-text-stroke:0.4px #2b2b2b;transform:scaleX(0.9885);">Veterinarian</span>
<div style="left:264px;top:465px;width:1553.5px;height:1px;background:#d6d6d6;"></div>
<div style="left:264px;top:466px;width:1553.5px;height:1px;background:#f0f0f0;"></div>
<div style="left:264px;top:500px;width:1553.5px;height:1px;background:#ddd;"></div>
<div style="left:264px;top:534px;width:1553.5px;height:1px;background:#ddd;"></div>
<div style="left:264px;top:569px;width:1553.5px;height:1px;background:#ddd;"></div>
<div style="left:264px;top:604px;width:1553.5px;height:1px;background:#ddd;"></div>
<div style="left:264px;top:639px;width:1553.5px;height:1px;background:#ddd;"></div>
<div style="left:264px;top:673px;width:1553.5px;height:1px;background:#ddd;"></div>
<span class="t" style="left:270.80px;top:475.15px;font-size:14.0px;color:#333;transform:scaleX(0.9284);">07 Nov 2025</span>
<span class="t" style="left:375.10px;top:475.15px;font-size:14.0px;color:#333;transform:scaleX(0.9183);">153 days</span>
<span class="t" style="left:478.80px;top:475.15px;font-size:14.0px;color:#333;transform:scaleX(0.9583);">17 Mar 2026</span>
<span class="t" style="left:1305.10px;top:475.15px;font-size:14.0px;color:#333;transform:scaleX(0.8923);">(None)</span>
<span class="t" style="left:270.80px;top:509.95px;font-size:14.0px;color:#333;transform:scaleX(0.9256);">20 Oct 2025</span>
<span class="t" style="left:375.10px;top:509.95px;font-size:14.0px;color:#333;transform:scaleX(0.9183);">120 days</span>
<span class="t" style="left:478.80px;top:509.95px;font-size:14.0px;color:#333;transform:scaleX(0.9613);">01 Apr 2026</span>
<span class="t" style="left:1305.10px;top:509.95px;font-size:14.0px;color:#333;transform:scaleX(0.9322);">N - Natural</span>
<a class="t" style="left:1448.40px;top:509.95px;font-size:14.0px;color:#337ab7;transform:scaleX(0.9766);">510210</a>
<span class="t" style="left:270.80px;top:544.75px;font-size:14.0px;color:#333;transform:scaleX(0.9081);">14 Jun 2025</span>
<span class="t" style="left:630.70px;top:544.75px;font-size:14.0px;color:#333;transform:scaleX(0.9322);">N - Natural</span>
<a class="t" style="left:891.10px;top:544.75px;font-size:14.0px;color:#337ab7;transform:scaleX(0.9766);">510210</a>
<span class="t" style="left:1114.70px;top:544.75px;font-size:14.0px;color:#333;transform:scaleX(0.9212);">14 Jul 2025</span>
<svg style="left:1252px;top:546.0px" width="15" height="11" viewBox="0 0 15 11"><path d="M1.9 5.6 L5.6 9.7 L12.8 2.2" fill="none" stroke="#333" stroke-width="1.45"/></svg>
<span class="t" style="left:270.80px;top:579.55px;font-size:14.0px;color:#333;transform:scaleX(0.9090);">01 Jun 2025</span>
<span class="t" style="left:630.70px;top:579.55px;font-size:14.0px;color:#333;transform:scaleX(0.9351);">A - AI after fixed time from synchronisation</span>
<a class="t" style="left:891.10px;top:579.55px;font-size:14.0px;color:#337ab7;transform:scaleX(0.9289);">CJPPQ00011</a>
<span class="t" style="left:1114.70px;top:579.55px;font-size:14.0px;color:#333;transform:scaleX(0.9090);">01 Jun 2025</span>
<svg style="left:1252px;top:580.8px" width="15" height="11" viewBox="0 0 15 11"><path d="M1.9 5.6 L5.6 9.7 L12.8 2.2" fill="none" stroke="#333" stroke-width="1.45"/></svg>
<span class="t" style="left:270.80px;top:614.15px;font-size:14.0px;color:#333;transform:scaleX(0.9127);">10 Jan 2023</span>
<span class="t" style="left:375.10px;top:614.15px;font-size:14.0px;color:#333;transform:scaleX(0.9166);">8 weeks</span>
<span class="t" style="left:478.80px;top:614.15px;font-size:14.0px;color:#333;transform:scaleX(0.9380);">25 Aug 2023</span>
<span class="t" style="left:1305.10px;top:614.15px;font-size:14.0px;color:#333;transform:scaleX(0.8923);">(None)</span>
<span class="t" style="left:270.80px;top:648.95px;font-size:14.0px;color:#333;transform:scaleX(0.9240);">04 Dec 2022</span>
<span class="t" style="left:630.70px;top:648.95px;font-size:14.0px;color:#333;transform:scaleX(0.9322);">N - Natural</span>
<span class="t" style="left:1114.70px;top:648.95px;font-size:14.0px;color:#333;transform:scaleX(0.9116);">31 Dec 2022</span>
<span class="t" style="left:270.80px;top:683.75px;font-size:14.0px;color:#333;transform:scaleX(0.9274);">20 Nov 2022</span>
<span class="t" style="left:630.70px;top:683.75px;font-size:14.0px;color:#333;transform:scaleX(0.9066);">I - AI on observed standing heat</span>
<a class="t" style="left:891.10px;top:683.75px;font-size:14.0px;color:#337ab7;transform:scaleX(0.9392);">SID3036</a>
<span class="t" style="left:1114.70px;top:683.75px;font-size:14.0px;color:#333;transform:scaleX(0.9274);">20 Nov 2022</span>
<svg style="left:1252px;top:685.0px" width="15" height="11" viewBox="0 0 15 11"><path d="M1.9 5.6 L5.6 9.7 L12.8 2.2" fill="none" stroke="#333" stroke-width="1.45"/></svg>
<svg style="left:1278.2px;top:499.3px" width="306.80" height="36.50" viewBox="0 0 306.80 36.50"><rect x="1.75" y="1.75" width="303.30" height="33.00" fill="none" stroke="#e31c22" stroke-width="3.5"/></svg>
<svg style="left:1234.7px;top:534.2px" width="47.50" height="35.40" viewBox="0 0 47.50 35.40"><rect x="1.75" y="1.75" width="44.00" height="31.90" fill="none" stroke="#e31c22" stroke-width="3.5"/></svg>
</section>
<div class="g">
<div style="left:0px;top:0px;width:1915px;height:1px;background:#000;"></div>
<div style="left:0px;top:0px;width:1px;height:724px;background:#000;"></div>
<div style="left:1914px;top:48px;width:1px;height:676px;background:#b0b0b0;"></div>
<div style="left:1914px;top:1px;width:1px;height:47px;background:#013d2c;"></div>
<div style="left:0px;top:723px;width:1915px;height:1px;background:#686868;"></div>
</div>
</body></html>
